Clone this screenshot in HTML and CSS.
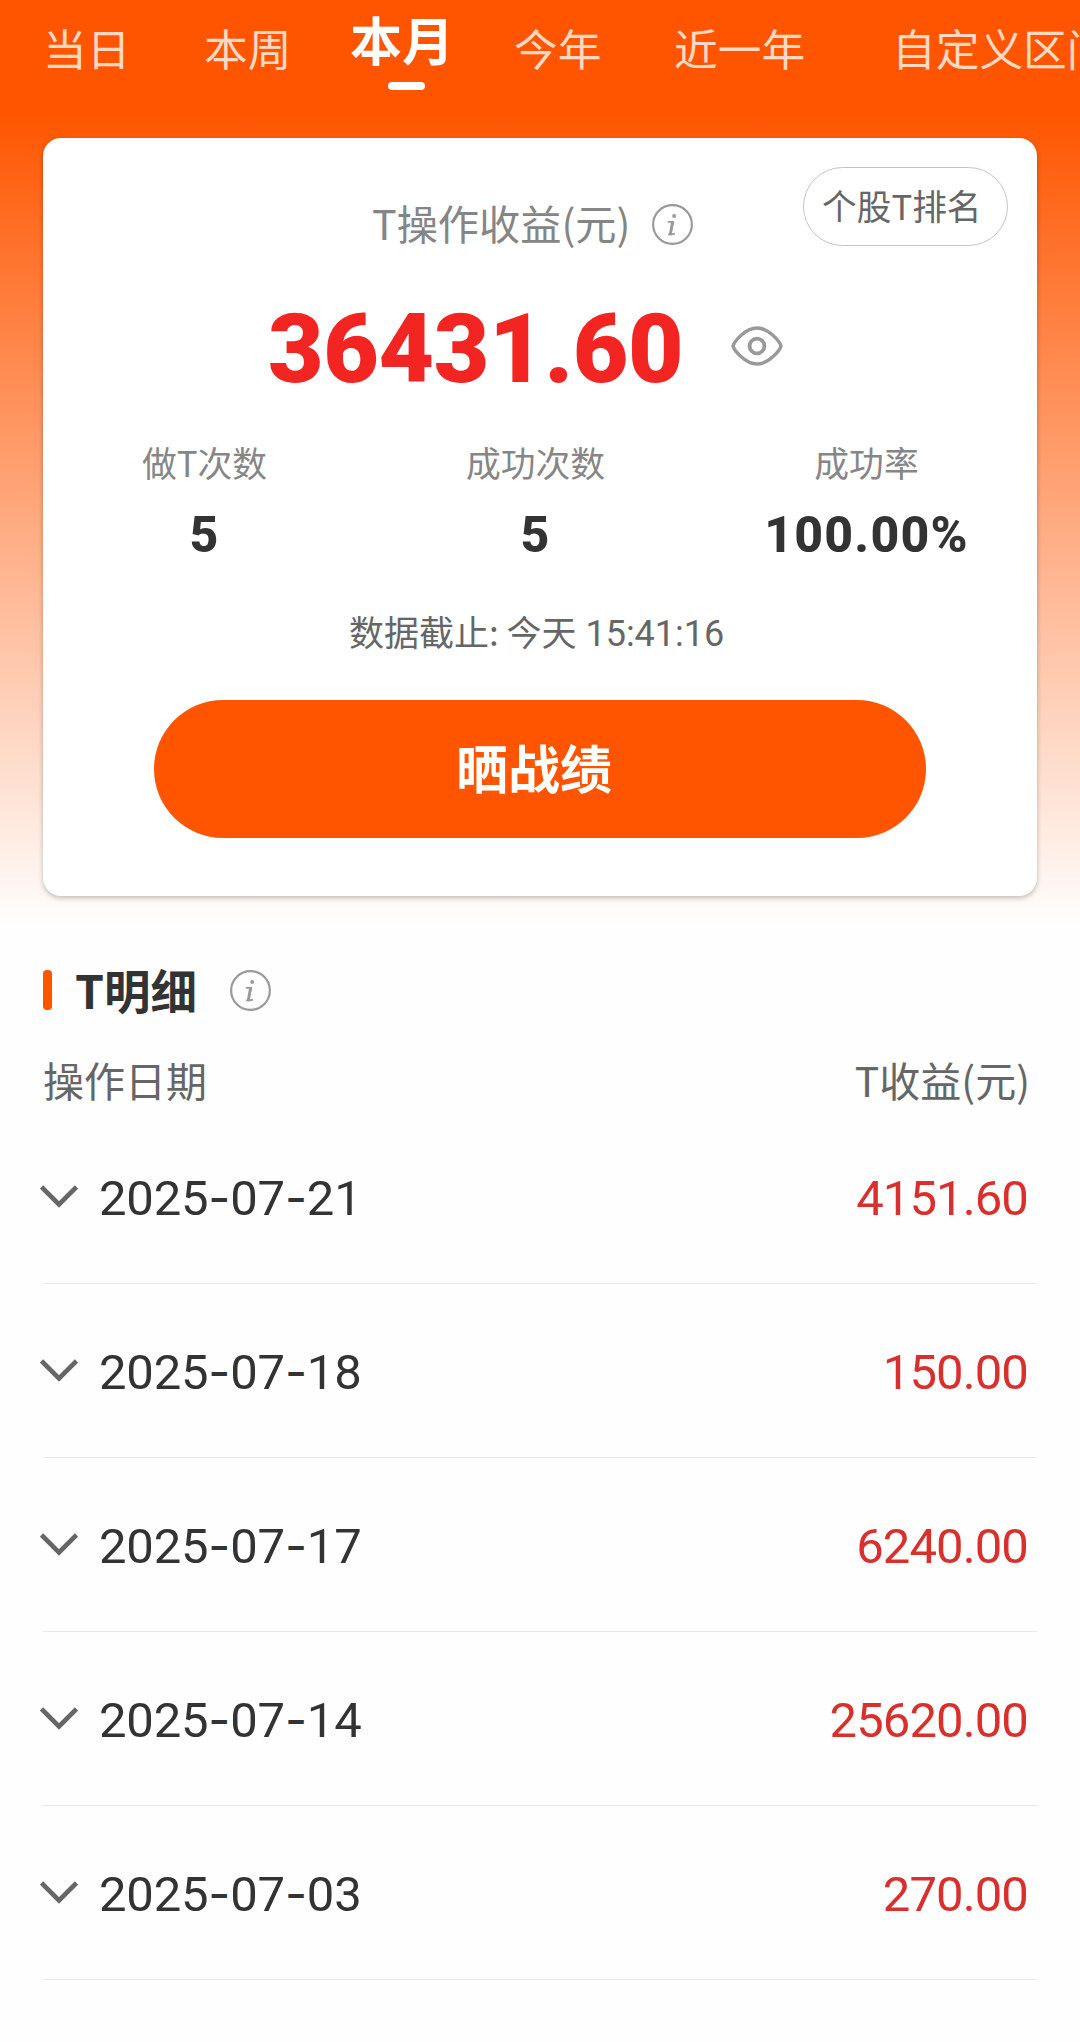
FILE: index.html
```html
<!DOCTYPE html>
<html lang="zh-CN">
<head>
<meta charset="utf-8">
<title>T操作收益</title>
<link rel="stylesheet" href="styles.css">
</head>
<body>
<svg class="defs" aria-hidden="true">
  <symbol id="info" viewBox="0 0 40 40">
    <circle cx="20" cy="20" r="18.9" fill="none" stroke="currentColor" stroke-width="2.1"/>
    <circle cx="21.6" cy="11.7" r="1.9" fill="currentColor"/>
    <path d="M15.4 17.5H20.6L18.2 29.5M15.8 29.6Q20 30 22.4 29" fill="none" stroke="currentColor" stroke-width="1.8"/>
    <path d="M20 17.5L17.8 29.4" stroke="currentColor" stroke-width="2.7"/>
  </symbol>
  <symbol id="chevron" viewBox="0 0 38 24">
    <path d="M1.5 2L19 19.5L36.5 2" fill="none" stroke="currentColor" stroke-width="4.6"/>
  </symbol>
</svg>
<main class="page">
  <nav class="tabs">
    <a class="tab">当日</a>
    <a class="tab">本周</a>
    <a class="tab tab-active">本月</a>
    <a class="tab">今年</a>
    <a class="tab">近一年</a>
    <a class="tab">自定义区间</a>
  </nav>

  <section class="card">
    <a class="rank">个股T排名</a>
    <div class="title"><span>T操作收益(元)</span><svg class="info"><use href="#info"/></svg></div>
    <div class="total">
      <span class="total-value">36431.60</span>
      <svg class="eye" viewBox="0 0 52 40">
        <path d="M2 20C3 16 14 2 26 2S49 16 50 20C49 24 38 38 26 38S3 24 2 20Z" fill="none" stroke="currentColor" stroke-width="3.4"/>
        <circle cx="26" cy="20" r="7.4" fill="none" stroke="currentColor" stroke-width="3.8"/>
      </svg>
    </div>
    <div class="stats">
      <div class="stat"><span class="stat-label">做T次数</span><b class="stat-value">5</b></div>
      <div class="stat"><span class="stat-label">成功次数</span><b class="stat-value">5</b></div>
      <div class="stat"><span class="stat-label">成功率</span><b class="stat-value">100.00%</b></div>
    </div>
    <div class="asof">数据截止: 今天 <span class="num">15:41:16</span></div>
    <a class="share">晒战绩</a>
  </section>

  <section class="detail">
    <h2 class="heading"><i class="bar"></i><span class="heading-text">T明细</span><svg class="info"><use href="#info"/></svg></h2>
    <div class="columns"><span>操作日期</span><span>T收益(元)</span></div>
    <div class="row"><svg class="chevron"><use href="#chevron"/></svg><span class="date">2025<i>-</i>07<i>-</i>21</span><span class="amount">4151.60</span></div>
    <div class="row"><svg class="chevron"><use href="#chevron"/></svg><span class="date">2025<i>-</i>07<i>-</i>18</span><span class="amount">150.00</span></div>
    <div class="row"><svg class="chevron"><use href="#chevron"/></svg><span class="date">2025<i>-</i>07<i>-</i>17</span><span class="amount">6240.00</span></div>
    <div class="row"><svg class="chevron"><use href="#chevron"/></svg><span class="date">2025<i>-</i>07<i>-</i>14</span><span class="amount">25620.00</span></div>
    <div class="row"><svg class="chevron"><use href="#chevron"/></svg><span class="date">2025<i>-</i>07<i>-</i>03</span><span class="amount">270.00</span></div>
  </section>
</main>
</body>
</html>
```
FILE: styles.css
```css
* { box-sizing: border-box; }
body {
  margin: 0;
  background: #fefefe;
  font-family: "Noto Sans CJK SC", "Noto Sans", sans-serif;
  color: #333;
}
.defs { position: absolute; width: 0; height: 0; }
.page {
  width: 1080px;
  height: 2041px;
  overflow: hidden;
  background: linear-gradient(#ff5500 110px, #fefefe 925px);
}
.tabs {
  display: grid;
  grid-template-columns: 161px 147px 163px 160px 218px auto;
  height: 138px;
  padding-left: 43px;
  white-space: nowrap;
}
.tab {
  padding-top: 15px;
  font-size: 43.7px;
  line-height: 64px;
  color: #ffd9c2;
}
.tab-active {
  display: flex;
  flex-direction: column;
  align-items: center;
  width: 102px;
  padding-top: 7px;
  font-size: 52px;
  font-weight: 700;
  color: #fff;
}
.tab-active::after {
  content: "";
  width: 37px;
  height: 8px;
  margin: 11px 0 0 9px;
  border-radius: 4px;
  background: #fff;
}
.card {
  position: relative;
  width: 994px;
  height: 758px;
  margin-left: 43px;
  padding-top: 59px;
  border-radius: 18px;
  background: #fff;
  box-shadow: 0 2px 5px rgba(0, 0, 0, .25);
}
.rank {
  position: absolute;
  top: 29px;
  right: 29px;
  width: 205px;
  height: 79px;
  padding-left: 18px;
  border: 1.5px solid #c4c4c4;
  border-radius: 40px;
  font-size: 34.7px;
  line-height: 74px;
  color: #666;
}
.title {
  display: flex;
  align-items: center;
  gap: 22px;
  height: 54px;
  padding-left: 329px;
  font-size: 41.2px;
  line-height: 50px;
  color: #858585;
}
.title span { margin-top: -4px; }
.info { width: 41px; height: 41px; color: #999; }
.total {
  display: flex;
  align-items: center;
  gap: 48px;
  height: 120px;
  margin-top: 38px;
  padding-left: 225px;
}
.total-value {
  font: 900 96px/120px Roboto, sans-serif;
  letter-spacing: -.4px;
  color: #f32523;
}
.eye { width: 52px; height: 40px; margin-top: -6px; color: #999; }
.stats {
  display: grid;
  grid-template-columns: repeat(3, 331px);
  margin: 28px 0 0 -4px;
}
.stat { display: flex; flex-direction: column; align-items: center; }
.stat-label { font-size: 34.8px; line-height: 50px; color: #868686; }
.stat-value { margin-top: 18px; font: 800 50px/60px Roboto, sans-serif; letter-spacing: 1.2px; }
.asof {
  margin-top: 41px;
  padding-left: 306px;
  font-size: 35px;
  line-height: 50px;
  white-space: nowrap;
  color: #666;
}
.num { margin-left: 1px; font: 36px/1 Roboto, sans-serif; }
.share {
  display: block;
  width: 772px;
  height: 138px;
  margin: 44px 0 0 111px;
  padding-right: 12px;
  border-radius: 69px;
  background: #ff5500;
  font-size: 52px;
  font-weight: 700;
  line-height: 133px;
  text-align: center;
  color: #fff;
}
.detail { padding: 64px 43px 0; }
.heading {
  display: flex;
  align-items: center;
  height: 60px;
  margin: 0;
  font-size: 46.5px;
  font-weight: 700;
}
.heading-text { margin-top: -3px; line-height: 56px; }
.bar { width: 9px; height: 40px; margin-right: 23px; border-radius: 4px; background: #ff5500; }
.heading .info { margin-left: 33px; }
.columns {
  display: flex;
  justify-content: space-between;
  height: 90px;
  padding: 29px 7px 0 0;
  font-size: 41px;
  line-height: 60px;
  color: #666;
}
.row {
  display: flex;
  align-items: center;
  height: 174px;
  padding-right: 9px;
  border-bottom: 1px solid #e8e8e8;
  font: 49px/60px Roboto, sans-serif;
}
.chevron { width: 38px; height: 24px; margin: 0 21px 0 -3px; color: #666; }
.date { margin-top: 4px; letter-spacing: -.2px; }
.date i { font-family: Inter, sans-serif; font-style: normal; font-size: 48px; }
.amount { margin: 4px 0 0 auto; letter-spacing: -.9px; color: #d9302e; }
```
